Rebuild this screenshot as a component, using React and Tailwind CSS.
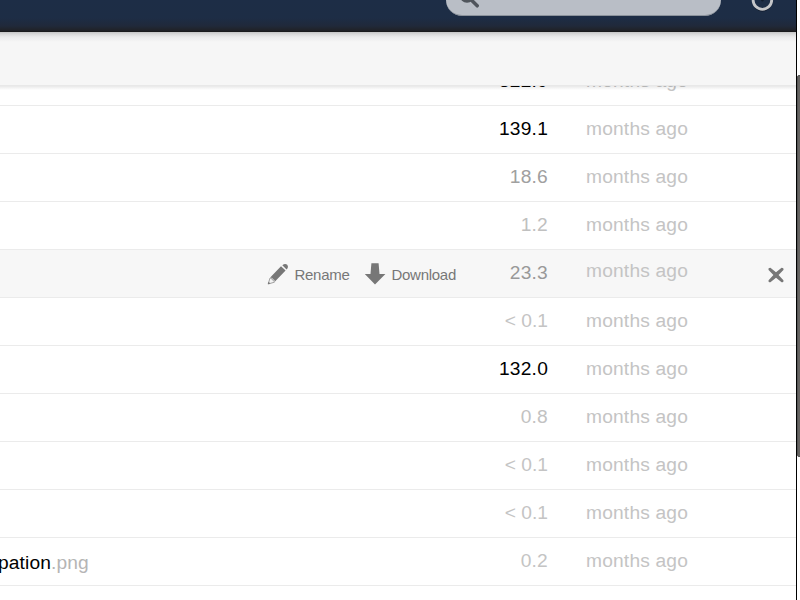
const rows = [
  { size: '322.9', tone: 'text-black tracking-[0.2px]' },
  { size: '139.1', tone: 'text-black tracking-[0.2px]' },
  { size: '18.6', tone: 'text-[#a0a0a0] tracking-[0.2px]' },
  { size: '1.2', tone: 'text-[#c0c0c0] tracking-[0.2px]' },
  { size: '23.3', tone: 'text-[#999999] tracking-[0.2px]', active: true },
  { size: '< 0.1', tone: 'text-[#c4c4c4]' },
  { size: '132.0', tone: 'text-black tracking-[0.2px]' },
  { size: '0.8', tone: 'text-[#c2c2c2] tracking-[0.2px]' },
  { size: '< 0.1', tone: 'text-[#c4c4c4]' },
  { size: '< 0.1', tone: 'text-[#c4c4c4]' },
  { size: '0.2', tone: 'text-[#c4c4c4] tracking-[0.2px]', name: 'pation', ext: '.png' },
  { size: '', tone: 'text-black', blank: true },
];

function PencilIcon() {
  return (
    <svg className="h-[22px] w-[22px] shrink-0" viewBox="0 0 22 22" fill="#777777">
      <path d="M14 3.2 18.6 7.6 8 18.6Q7.6 16.7 6.2 16.2 5.6 14.6 3.2 14.4Z" />
      <path d="M15.3 2.2Q18 .1 20.2 1.7 22 4 19.6 6.5Z" />
      <path d="M3 15 1.2 21 7.4 19.2 6.8 17.2 5.2 16.8 4.8 15.2Z" fill="#f3f3f3" stroke="#8b8b8b" strokeWidth=".8" />
      <path d="M.8 21.3 1.5 18.7 3.4 20.4Z" />
    </svg>
  );
}

function DownloadIcon() {
  return (
    <svg className="h-[22px] w-[22px] shrink-0" viewBox="0 0 22 22" fill="#777777">
      <path d="M7.4.3h7.2l.9 10.6h5.9L11 21.5.8 10.9h5.7Z" />
    </svg>
  );
}

function Row({ row }) {
  return (
    <div className={`flex h-12 shrink-0 border-b border-[#ebebeb] ${row.active ? 'bg-[#f7f7f7]' : 'bg-white'}`}>
      <div className="flex w-[456px] shrink-0">
        {row.name && (
          <div className="-ml-[2px] mt-[11px] text-[19.2px] leading-7 tracking-[0.12px] text-black">
            {row.name}<span className="text-[#b5b5b5]">{row.ext}</span>
          </div>
        )}
        {row.active && (
          <div className="ml-auto flex pt-[13px] text-[15px] leading-6 tracking-[-0.27px] text-[#777777]">
            <PencilIcon />
            <span className="ml-[5px] w-[70px]">Rename</span>
            <DownloadIcon />
            <span className="ml-[5px]">Download</span>
          </div>
        )}
      </div>
      <div className={`w-[92px] shrink-0 pt-[9px] text-right text-[19.2px] leading-7 ${row.tone}`}>{row.size}</div>
      <div className={`w-[219px] shrink-0 pl-[38px] text-[19.2px] leading-7 tracking-[0.18px] text-[#c4c4c4] ${row.active ? 'pt-[7px]' : 'pt-[9px]'}`}>
        {row.blank ? '' : 'months ago'}
      </div>
      {row.active && (
        <svg className="mt-[17px] h-4 w-[18px] shrink-0" viewBox="0 0 18 16" fill="#777777">
          <path d="M3.4.8 9 5.2 14.6.8Q17.2 1 16.4 3L11.6 8l4.8 5.2q.6 2-1.8 2L9 10.8l-5.6 4.4q-2.5 0-1.8-2L6.4 8 1.6 3Q.9.9 3.4.8Z" />
        </svg>
      )}
    </div>
  );
}

export default function App() {
  return (
    <div className="flex h-[600px] w-[800px] overflow-hidden bg-white font-['Liberation_Sans',Arial,sans-serif]">
      <div className="flex w-[796px] shrink-0 flex-col overflow-hidden">
        <header className="flex h-8 shrink-0 items-start bg-[linear-gradient(#1d2d46_0px,#1d2d45_18px,#20293a_26px,#202124_31px,#171717_32px)]">
          <div className="-mt-4 ml-[446px] h-8 w-[275px] rounded-full border-b border-[#8b929b] bg-[#b9bec6]">
            <svg className="ml-[13px] mt-1 h-[22px] w-[24px]" viewBox="0 0 24 22" fill="none" stroke="#50555c">
              <circle cx="8" cy="7.6" r="5.4" strokeWidth="3.6" />
              <path d="m12.4 12 5.8 5.8" strokeWidth="3.5" strokeLinecap="round" />
            </svg>
          </div>
          <svg className="ml-[29px] h-4 w-6" viewBox="0 0 24 16" fill="none">
            <circle cx="12.4" cy="1" r="9.4" stroke="#0f1928" strokeWidth="2" />
            <circle cx="12.4" cy="0" r="9.3" stroke="#c5c6c9" strokeWidth="2.8" />
            <circle cx="12.4" cy="0" r="1.4" fill="#111c2c" />
          </svg>
        </header>
        <div className="relative h-[54px] shrink-0 bg-[linear-gradient(#c5c5c5_0px,#d8d8d8_2px,#ebebeb_5px,#f6f6f6_10px,#f6f6f6_53px,#e8e8e8_53px)] shadow-[0_1px_3px_rgba(0,0,0,0.12)]" />
        <main className="relative flex min-h-0 grow flex-col overflow-hidden">
          <div className="-mt-7 flex shrink-0 flex-col [clip-path:inset(28px_0_0_0)]">
            {rows.map((row, i) => <Row key={i} row={row} />)}
          </div>
          <div className="pointer-events-none absolute inset-x-0 top-0 h-1 bg-[linear-gradient(rgba(0,0,0,0.09),transparent)]" />
        </main>
      </div>
      <div className="w-px shrink-0 bg-black" />
      <div className="w-[3px] shrink-0 bg-white pt-[75px]">
        <div className="h-[382px] w-[6px] rounded-[2px] border border-[#555555] bg-[#666462]" />
      </div>
    </div>
  );
}
